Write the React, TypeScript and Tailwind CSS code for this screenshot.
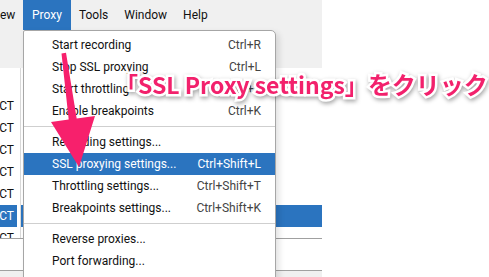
import React from "react";

type Item = { label: string; shortcut?: string; active?: boolean } | "sep";

const items: Item[] = [
  { label: "Start recording", shortcut: "Ctrl+R" },
  { label: "Stop SSL proxying", shortcut: "Ctrl+L" },
  { label: "Start throttling", shortcut: "Ctrl+T" },
  { label: "Enable breakpoints", shortcut: "Ctrl+K" },
  "sep",
  { label: "Recording settings..." },
  { label: "SSL proxying settings...", shortcut: "Ctrl+Shift+L", active: true },
  { label: "Throttling settings...", shortcut: "Ctrl+Shift+T" },
  { label: "Breakpoints settings...", shortcut: "Ctrl+Shift+K" },
  "sep",
  { label: "Reverse proxies..." },
  { label: "Port forwarding..." },
];

const rows = [0, 1, 2, 3, 4, 5, 6];

export default function App() {
  return (
    <div className="relative w-[489px] h-[277px] overflow-hidden bg-white flex font-['Roboto','Liberation_Sans',sans-serif] text-[12px] text-[#111]">
      <div className="w-[322px] h-full flex flex-col bg-[#f0f0f0]">
        <div className="h-[30px] flex items-stretch shrink-0">
          <div className="w-[23px] flex items-center">ew</div>
          <div className="px-[9px] flex items-center bg-[#2b74bf] text-white">Proxy</div>
          <div className="px-[8px] flex items-center">Tools</div>
          <div className="px-[8px] flex items-center">Window</div>
          <div className="px-[8px] flex items-center">Help</div>
        </div>
        <div className="h-[38px] shrink-0" />
        <div className="h-[170px] shrink-0 bg-white flex">
          <div className="w-[21px] border-r border-[#d9d9d9] pt-[27px] flex flex-col">
            {rows.map((r) => (
              <div
                key={r}
                className={
                  "h-[22px] mr-[3px] flex items-center justify-end overflow-hidden pr-[3px] shrink-0 " +
                  (r === 5 ? "bg-[#2b74bf] text-white" : "")
                }
              >
                <span className="whitespace-nowrap">CT</span>
              </div>
            ))}
          </div>
          <div className="flex-1 pt-[27px] flex flex-col">
            {rows.map((r) => (
              <div key={r} className={"h-[22px] shrink-0 " + (r === 5 ? "bg-[#2b74bf]" : "")} />
            ))}
          </div>
        </div>
        <div className="h-px bg-[#a0a0a0] shrink-0" />
        <div className="h-[31px] bg-white shrink-0" />
        <div className="h-px bg-[#a0a0a0] shrink-0" />
        <div className="flex-1" />
      </div>

      {/* Dropdown menu */}
      <div className="absolute left-[23px] top-[30px] w-[253px] h-[262px] bg-white border border-[#a6a6a6] rounded-tr-[5px] rounded-tl-[2px] shadow-[3px_3px_6px_rgba(0,0,0,0.12)] pt-[3px] flex flex-col">
        {items.map((it, i) =>
          it === "sep" ? (
            <div key={i} className="h-[9px] flex items-center shrink-0">
              <div className="h-px w-full bg-[#cfcfcf]" />
            </div>
          ) : (
            <div
              key={i}
              className={
                "h-[22px] shrink-0 flex items-center justify-between pl-[28px] pr-[14px] " +
                (it.active ? "bg-[#2b74bf] text-white" : "")
              }
            >
              <span>{it.label}</span>
              {it.shortcut && (
                <span className={it.active ? "text-white" : "text-[#444]"}>{it.shortcut}</span>
              )}
            </div>
          )
        )}
      </div>

      {/* Arrow */}
      <svg className="absolute left-0 top-0" width="489" height="277" viewBox="0 0 489 277">
        <polygon
          points="61.5,53.5 66,52.7 76.7,118.5 95,116 79,167 51,122 68.7,119.5"
          fill="#f7206c"
        />
      </svg>

      {/* Annotation */}
      <div className="absolute left-[115px] top-[72px] whitespace-nowrap font-['Noto_Sans_CJK_JP',sans-serif] font-bold text-[23px] leading-none text-[#f2216c] [-webkit-text-stroke:5px_white] [paint-order:stroke_fill] drop-shadow-[1px_2px_2px_rgba(0,0,0,0.35)]">
        「SSL Proxy settings」<span className="text-[24px]">をクリック</span>
      </div>
    </div>
  );
}
